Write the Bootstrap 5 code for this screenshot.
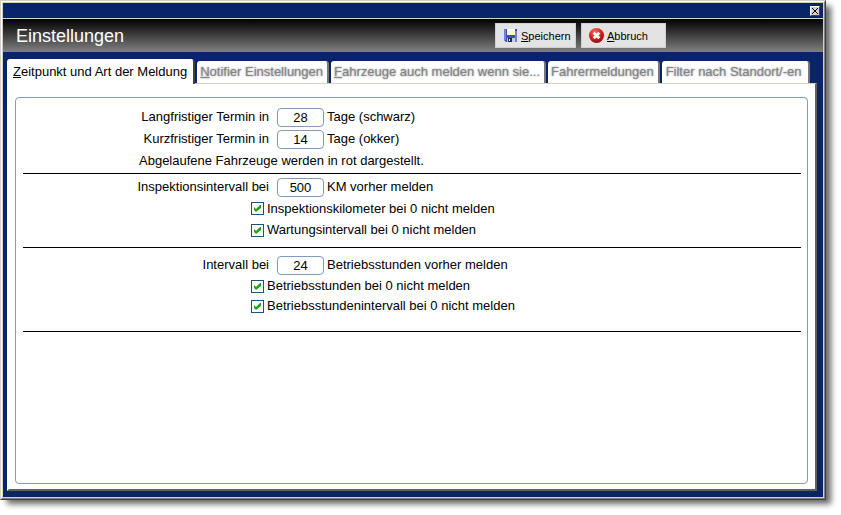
<!DOCTYPE html>
<html lang="de">
<head>
<meta charset="utf-8">
<meta name="viewport" content="width=device-width, initial-scale=1">
<title>Einstellungen</title>
<link rel="stylesheet" href="https://cdn.jsdelivr.net/npm/bootstrap@5.3.0/dist/css/bootstrap.min.css">
<style>
body { font-family: "Liberation Sans", Arial, sans-serif; font-size: 13px; line-height: 20px; color: #000; background: #fff; padding: 0 15px 15px 0; }
.window { background: #0a246a; border: 1px solid; border-color: #d4d0c8 #404040 #404040 #d4d0c8; box-shadow: 6px 5px 6px -1px rgba(0,0,0,.6); }
.window-edge { border: 1px solid; border-color: #fff #808080 #808080 #fff; }
.window-rim { border: 1px solid #d4d0c8; }
.caption { height: 15px; padding-right: 3px; }
.close-btn { width: 10px; height: 10px; background: #d4d0c8; border: 1px solid; border-color: #fff #404040 #404040 #fff; }
.close-btn svg { width: 6px; height: 6px; }
.toolbar { height: 34px; padding-left: 13px; border-top: 1px solid #d4d0c8; background: linear-gradient(#000, #808080); }
.toolbar h1 { font-size: 18px; line-height: 24px; color: #fff; }
.toolbar-actions { gap: 5px; padding-right: 157px; }
.tool-btn { --bs-btn-font-size: 11px; --bs-btn-line-height: 16px; --bs-btn-padding-x: 7px; --bs-btn-padding-y: 0; --bs-btn-color: #000; --bs-btn-bg: #e3e3e3; --bs-btn-border-color: #cfcfcf; --bs-btn-hover-bg: #eee; --bs-btn-hover-color: #000; --bs-btn-border-radius: 0; height: 25px; width: 81px; gap: 3px; }
.tool-btn.wide { width: 85px; }
.tool-btn svg { width: 15px; height: 15px; }
.workspace { padding: 7px 6px 6px 4px; }
.tabs { gap: 2px; }
.tab-btn { height: 22px; padding: 0 4px 0 3px; line-height: 22px; background: #fff; border: 0; border-right: 2px solid #777; border-radius: 3px 3px 0 0; color: #858585; text-shadow: 0 0 2px #858585; }
.tab-btn.active { height: 25px; padding: 0 6px; line-height: 26px; margin-bottom: -1px; color: #000; text-shadow: none; border-right-color: #404040; z-index: 1; }
.tab-btn.last-tab { padding: 0 6px 0 4px; }
.sheet { background: #fff; border: 2px solid; border-color: #d4d0c8 #606060 #606060 #fff; border-top-width: 1px; padding: 13px 7px 5px 6px; }
.frame { border: 1px solid #7f9db9; border-radius: 4px; padding: 8px 6px 0 7px; }
.group { border-bottom: 1px solid #000; padding-bottom: 6px; margin-bottom: 2px; }
.group.first { padding-bottom: 1px; }
.group.last { padding-bottom: 15px; padding-top: 4px; }
.line { min-height: 22px; gap: 3px; }
.group .line.tight { min-height: 21px; }
.group.last .line.tight { min-height: 20px; }
.line-label { width: 246px; margin-right: 5px; text-align: right; }
.num { width: 47px; height: 19px; padding: 0; border: 1px solid #7f9db9; border-radius: 4px; color: #000; font-size: 13px; line-height: 17px; text-align: center; }
.note { padding-left: 116px; }
.option { padding-left: 228px; }
.form-check-input.tick { width: 13px; height: 13px; margin: 0; border: 1px solid #1c5180; border-radius: 0; }
.form-check-input.tick:checked { background-color: #fff; border-color: #1c5180; background-size: 11px 11px; background-image: url("data:image/svg+xml,%3csvg xmlns='http://www.w3.org/2000/svg' viewBox='0 0 11 11'%3e%3cpath fill='%2321a121' d='M2 4l2 2 4-4h1v3L4 9 2 7z'/%3e%3c/svg%3e"); }
</style>
<script src="https://cdn.jsdelivr.net/npm/bootstrap@5.3.0/dist/js/bootstrap.bundle.min.js"></script>
</head>
<body class="vh-100 d-flex">
<main class="window flex-grow-1 d-flex">
 <div class="window-edge flex-grow-1 d-flex">
 <div class="window-rim flex-grow-1 d-flex flex-column">
  <div class="caption d-flex align-items-center justify-content-end">
   <button type="button" class="close-btn p-0 d-flex align-items-center justify-content-center" aria-label="Schließen"><svg viewBox="0 0 6 6" stroke="#000" stroke-width="1"><path d="M0 0L6 6M6 0L0 6"/></svg></button>
  </div>
  <header class="toolbar d-flex align-items-center justify-content-between">
   <h1 class="m-0 fw-normal">Einstellungen</h1>
   <div class="toolbar-actions d-flex">
    <button type="button" class="btn tool-btn d-flex align-items-center text-nowrap">
     <svg class="flex-shrink-0" viewBox="0 0 15 15"><path fill="#3c4fb5" d="M1 1h13v13H3l-2-2z"/><path fill="#6f82e0" d="M1 1h2v11H1zM12 3h2v11h-2z"/><path fill="#fbf7b9" d="M4 1h8v6H4z"/><path fill="#fff" d="M4 1h8v2H4z"/><path fill="#c5cae0" d="M4 10h8v4H4z"/><path fill="#1d265e" d="M5 10h4v4H5z"/><path fill="#eee" d="M6 11h1v2H6z"/></svg>
     <span><u>S</u>peichern</span></button>
    <button type="button" class="btn tool-btn wide d-flex align-items-center text-nowrap">
     <svg class="flex-shrink-0" viewBox="0 0 16 16"><defs><radialGradient id="stop" cx=".4" cy=".25" r=".8"><stop offset="0" stop-color="#f36a62"/><stop offset=".6" stop-color="#d01a1a"/><stop offset="1" stop-color="#9a0808"/></radialGradient></defs><circle cx="8" cy="8" r="8" fill="url(#stop)"/><path d="M5 5l6 6M11 5l-6 6" stroke="#fff" stroke-width="3"/></svg>
     <span><u>A</u>bbruch</span></button>
   </div>
  </header>
  <div class="workspace flex-grow-1 d-flex flex-column">
   <div class="tabs nav d-flex flex-nowrap align-items-end" role="tablist">
    <button type="button" role="tab" aria-selected="true" class="tab-btn active position-relative text-nowrap"><u>Z</u>eitpunkt und Art der Meldung</button>
    <button type="button" role="tab" aria-selected="false" class="tab-btn text-nowrap"><u>N</u>otifier Einstellungen</button>
    <button type="button" role="tab" aria-selected="false" class="tab-btn text-nowrap"><u>F</u>ahrzeuge auch melden wenn sie...</button>
    <button type="button" role="tab" aria-selected="false" class="tab-btn text-nowrap">Fahrermeldungen</button>
    <button type="button" role="tab" aria-selected="false" class="tab-btn last-tab text-nowrap">Filter nach Standort/-en</button>
   </div>
   <section class="sheet flex-grow-1 d-flex" role="tabpanel">
    <form class="frame flex-grow-1">
     <div class="group first">
      <div class="line d-flex align-items-center"><label class="line-label" for="lang">Langfristiger Termin in</label><input class="num" id="lang" value="28"><span>Tage (schwarz)</span></div>
      <div class="line d-flex align-items-center"><label class="line-label" for="kurz">Kurzfristiger Termin in</label><input class="num" id="kurz" value="14"><span>Tage (okker)</span></div>
      <div class="line note d-flex align-items-center">Abgelaufene Fahrzeuge werden in rot dargestellt.</div>
     </div>
     <div class="group">
      <div class="line d-flex align-items-center"><label class="line-label" for="km">Inspektionsintervall bei</label><input class="num" id="km" value="500"><span>KM vorher melden</span></div>
      <div class="line tight option d-flex align-items-center"><input type="checkbox" class="form-check-input tick" id="ikm" checked><label for="ikm">Inspektionskilometer bei 0 nicht melden</label></div>
      <div class="line option d-flex align-items-center"><input type="checkbox" class="form-check-input tick" id="wi" checked><label for="wi">Wartungsintervall bei 0 nicht melden</label></div>
     </div>
     <div class="group last">
      <div class="line d-flex align-items-center"><label class="line-label" for="std">Intervall bei</label><input class="num" id="std" value="24"><span>Betriebsstunden vorher melden</span></div>
      <div class="line tight option d-flex align-items-center"><input type="checkbox" class="form-check-input tick" id="bs" checked><label for="bs">Betriebsstunden bei 0 nicht melden</label></div>
      <div class="line tight option d-flex align-items-center"><input type="checkbox" class="form-check-input tick" id="bi" checked><label for="bi">Betriebsstundenintervall bei 0 nicht melden</label></div>
     </div>
    </form>
   </section>
  </div>
 </div>
 </div>
</main>
</body>
</html>
